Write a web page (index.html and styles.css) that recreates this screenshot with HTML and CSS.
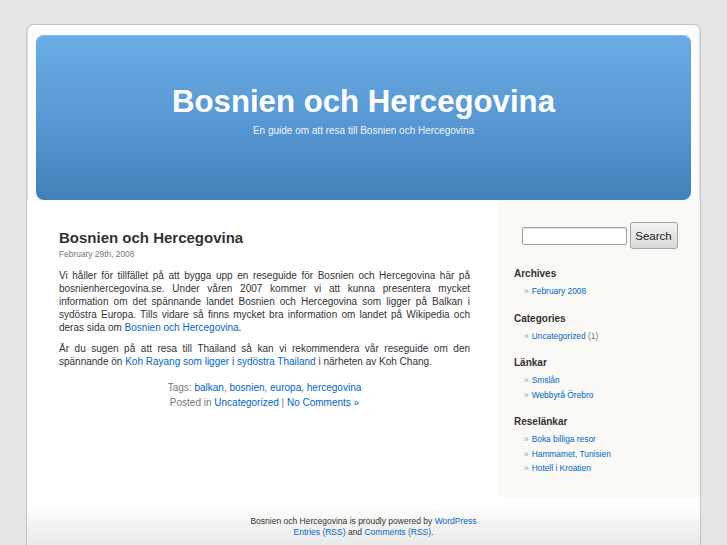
FILE: index.html
```html
<!DOCTYPE html>
<html lang="sv">
<head>
  <meta charset="UTF-8">
  <meta name="viewport" content="width=device-width, initial-scale=1.0">
  <title>Bosnien och Hercegovina</title>
  <link rel="stylesheet" href="styles.css">
</head>
<body>
  <div class="page">
    <!-- Header -->
    <div class="header">
      <h1><a href="#">Bosnien och Hercegovina</a></h1>
      <p class="description">En guide om att resa till Bosnien och Hercegovina</p>
    </div>

    <div class="main">
      <!-- Posts -->
      <div class="content">
        <div class="post">
          <h2><a href="#">Bosnien och Hercegovina</a></h2>
          <small class="date">February 29th, 2008</small>
          <div class="entry">
            <p>Vi håller för tillfället på att bygga upp en reseguide för Bosnien och Hercegovina här på bosnienhercegovina.se. Under våren 2007 kommer vi att kunna presentera mycket information om det spännande landet Bosnien och Hercegovina som ligger på Balkan i sydöstra Europa. Tills vidare så finns mycket bra information om landet på Wikipedia och deras sida om <a href="#">Bosnien och Hercegovina</a>.</p>
            <p>Är du sugen på att resa till Thailand så kan vi rekommendera vår reseguide om den spännande ön <a href="#">Koh Rayang som ligger i sydöstra Thailand</a> i närheten av Koh Chang.</p>
          </div>
          <p class="postmetadata">Tags: <a href="#">balkan</a>, <a href="#">bosnien</a>, <a href="#">europa</a>, <a href="#">hercegovina</a><br>
            Posted in <a href="#">Uncategorized</a> | <a href="#">No Comments »</a></p>
        </div>
      </div>

      <!-- Sidebar -->
      <div class="sidebar">
        <form class="searchform">
          <input type="text" class="search-input">
          <button type="submit" class="search-btn">Search</button>
        </form>

        <h3>Archives</h3>
        <ul>
          <li><a href="#">February 2008</a></li>
        </ul>

        <h3>Categories</h3>
        <ul>
          <li><a href="#">Uncategorized</a> <span class="count">(1)</span></li>
        </ul>

        <h3>Länkar</h3>
        <ul>
          <li><a href="#">Smslån</a></li>
          <li><a href="#">Webbyrå Örebro</a></li>
        </ul>

        <h3>Reselänkar</h3>
        <ul>
          <li><a href="#">Boka billiga resor</a></li>
          <li><a href="#">Hammamet, Tunisien</a></li>
          <li><a href="#">Hotell i Kroatien</a></li>
        </ul>
      </div>
    </div>

    <!-- Footer -->
    <div class="footer">
      <p>Bosnien och Hercegovina is proudly powered by <a href="#">WordPress</a><br>
        <a href="#">Entries (RSS)</a> and <a href="#">Comments (RSS)</a>.</p>
    </div>
  </div>
</body>
</html>
```

FILE: styles.css
```css
body {
  font-family: "Liberation Sans", Arial, sans-serif;
  margin: 0;
  padding-top: 24px;
  background-color: #e6e6e6;
  color: #333;
}
a {
  color: #06c;
  text-decoration: none;
}
.page {
  width: 673px;
  margin: 0 auto;
  padding-top: 10px;
  background-color: #fcfcfc;
  border: 1px solid #c2c2c2;
  border-radius: 7px 7px 0 0;
  box-shadow: inset 1px 0 0 #e2e2e2, inset -1px 0 0 #e2e2e2;
}
.header {
  margin: 0 9px;
  height: 165px;
  padding-top: 49px;
  box-sizing: border-box;
  text-align: center;
  border-radius: 8px;
  background: linear-gradient(#6aade6, #5796d2 55%, #4180b8);
  box-shadow: inset 0 1px 0 #8cc0ec;
}
.header h1 {
  margin: 0;
  font-size: 31.2px;
  line-height: 36px;
  font-weight: bold;
}
.header h1 a {
  color: #fff;
}
.description {
  margin: 4px 0 0;
  font-size: 10px;
  line-height: 14px;
  color: #eef4fb;
}
.main {
  display: flex;
  align-items: stretch;
}
.content {
  flex: 1;
  padding: 29px 28px 20px 32px;
  background-color: #fff;
}
.post h2 {
  margin: 0;
  font-size: 15px;
  line-height: 18px;
}
.post h2 a {
  color: #333;
}
.date {
  display: block;
  margin-top: 1.5px;
  font-size: 8.4px;
  line-height: 11px;
  color: #777;
}
.entry {
  margin-top: 9px;
}
.entry p {
  margin: 0 0 8px;
  font-size: 10px;
  line-height: 13px;
  text-align: justify;
}
.postmetadata {
  margin: 12px 0 0;
  font-size: 10px;
  line-height: 15px;
  text-align: center;
  color: #777;
}
.sidebar {
  width: 202px;
  padding: 22px 16px 21px;
  box-sizing: border-box;
  background-color: #faf9f5;
}
.searchform {
  display: flex;
  justify-content: center;
  align-items: center;
  gap: 3px;
  margin: 0 0 18px;
  padding-left: 1px;
}
.search-input {
  width: 105px;
  height: 18px;
  box-sizing: border-box;
  margin: 0;
  border: 1px solid #a0a0a0;
  border-radius: 2px;
  background: #fff;
  box-shadow: inset 0 1px 1px rgba(0,0,0,0.1);
}
.search-btn {
  width: 48px;
  height: 27px;
  padding: 0;
  font-family: "Liberation Sans", Arial, sans-serif;
  font-size: 11.5px;
  color: #222;
  border: 1px solid #a5a5a5;
  border-radius: 3px;
  background: linear-gradient(#f4f4f4, #d9d9d9);
}
.sidebar h3 {
  margin: 0;
  font-size: 10px;
  line-height: 13px;
  font-weight: bold;
  color: #333;
}
.sidebar ul {
  list-style: none;
  margin: 4px 0 13px;
  padding: 0 0 0 10px;
}
.sidebar ul:last-child {
  margin-bottom: 0;
}
.sidebar li {
  font-size: 8.4px;
  line-height: 14.5px;
}
.sidebar li::before {
  content: "\00BB";
  color: #999;
  margin-right: 3px;
}
.count {
  color: #777;
}
.footer {
  padding: 19px 0 10px;
  background: linear-gradient(#fff, #fff 20%, #f3f2f0 55%, #e9e9e9);
  text-align: center;
}
.footer p {
  margin: 0;
  font-size: 8.5px;
  line-height: 11.5px;
  color: #333;
}
```
